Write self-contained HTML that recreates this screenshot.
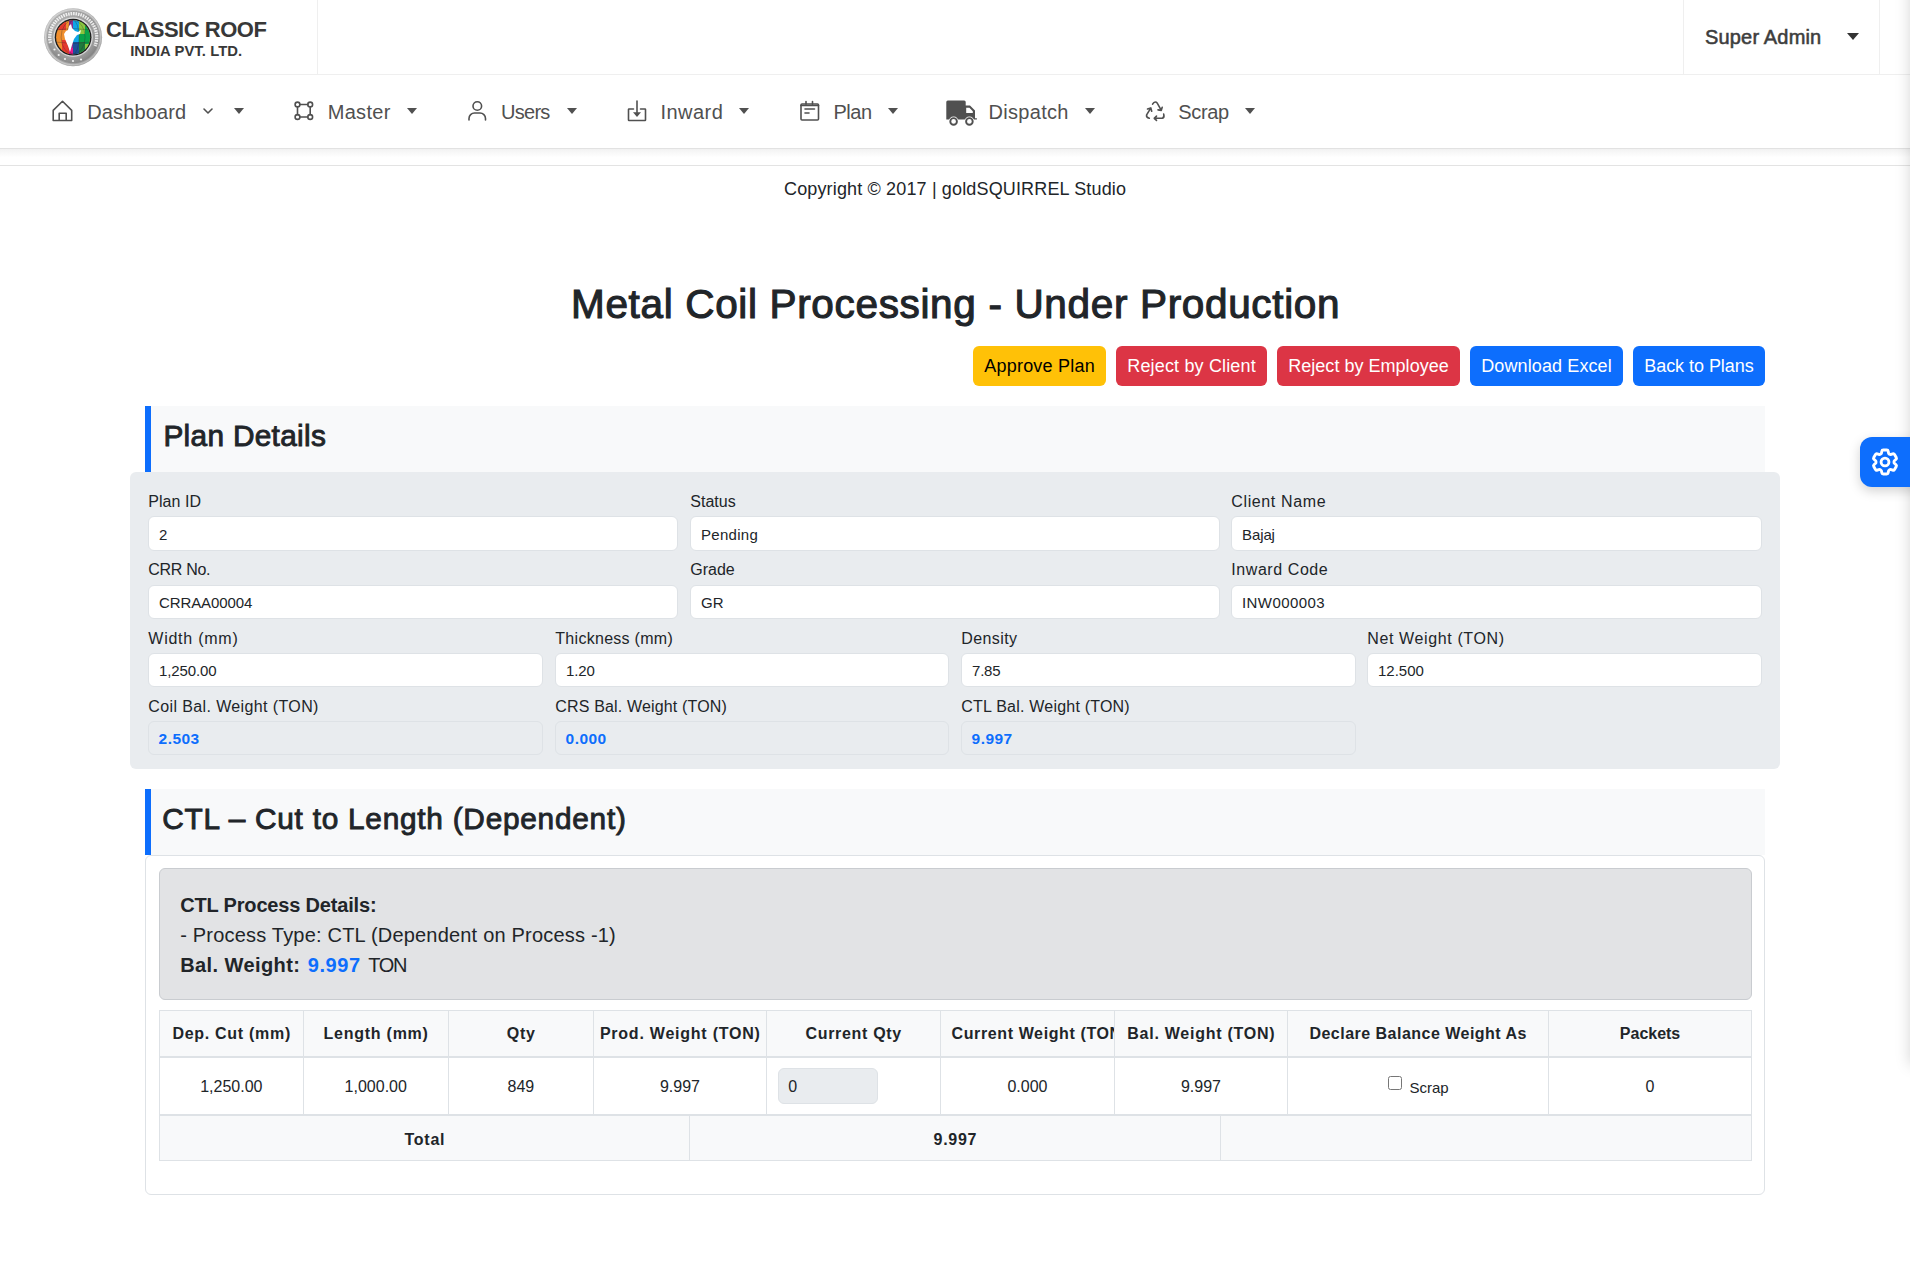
<!DOCTYPE html>
<html><head><meta charset="utf-8"><title>Metal Coil Processing</title>
<style>
html,body{margin:0;padding:0;}
body{width:1910px;height:1273px;position:relative;overflow:hidden;background:#fff;font-family:"Liberation Sans",sans-serif;color:#212529;}
.t{position:absolute;white-space:nowrap;line-height:1;}
.b{position:absolute;}
.caret{position:absolute;width:0;height:0;border-style:solid;}
</style></head><body>
<div class="b" style="left:0px;top:0px;width:1910px;height:74px;background:#fff;"></div>
<div class="b" style="left:0px;top:74px;width:1910px;height:1px;background:#efefef;"></div>
<div class="b" style="left:317px;top:0px;width:1px;height:74px;background:#efefef;"></div>
<div class="b" style="left:1683px;top:0px;width:1px;height:74px;background:#efefef;"></div>
<div class="b" style="left:1879px;top:0px;width:1px;height:74px;background:#efefef;"></div>
<div class="b" style="left:0px;top:75px;width:1910px;height:73px;background:#fff;"></div>
<div class="b" style="left:0px;top:149px;width:1910px;height:8px;background:linear-gradient(#f1f1f1,#f4f4f4 14%,#f8f8f8 45%,#fdfdfd 88%,#fff);"></div>
<div class="b" style="left:0px;top:148px;width:1910px;height:1px;background:#e2e2e2;"></div>
<div class="b" style="left:0px;top:165px;width:1910px;height:1px;background:#e3e3e3;"></div>
<svg class="b" style="left:40px;top:4px" width="66" height="66" viewBox="0 0 66 66">
<defs>
<radialGradient id="ring" cx="50%" cy="50%" r="50%"><stop offset="0.6" stop-color="#d8d8d8"/><stop offset="0.7" stop-color="#9d9d9d"/><stop offset="0.88" stop-color="#8a8a8a"/><stop offset="0.95" stop-color="#c9c9c9"/><stop offset="1" stop-color="#a5a5a5"/></radialGradient>
<linearGradient id="sh" x1="0" y1="0" x2="1" y2="1"><stop offset="0" stop-color="#fff" stop-opacity="0.35"/><stop offset="0.5" stop-color="#fff" stop-opacity="0"/><stop offset="1" stop-color="#000" stop-opacity="0.2"/></linearGradient>
<clipPath id="gc"><circle cx="33.1" cy="33.2" r="17"/></clipPath>
</defs>
<circle cx="33.1" cy="33.2" r="29" fill="url(#ring)"/>
<circle cx="33.1" cy="33.2" r="29" fill="url(#sh)"/>
<path d="M10.5 39 A23.5 23.5 0 1 1 55 42" fill="none" stroke="#f4f4f4" stroke-width="3.4" stroke-dasharray="1.7 0.8" opacity="0.9"/>
<circle cx="33.1" cy="33.2" r="19.6" fill="#dcdcdc"/>
<circle cx="33.1" cy="33.2" r="18.4" fill="#1e1e1e"/>
<g clip-path="url(#gc)">
<rect x="14" y="14" width="40" height="40" fill="#f0902f"/>
<path d="M14 14 H26 V26 H14 Z" fill="#e53a2f"/>
<path d="M22 36 H29 V54 H22 Z" fill="#e53a2f"/>
<rect x="29" y="14" width="4" height="40" fill="#8b2f8f"/>
<rect x="29" y="44" width="4" height="10" fill="#e8168c"/>
<rect x="33" y="14" width="6" height="40" fill="#10a6e6"/>
<rect x="33" y="38" width="6" height="16" fill="#1d4f9a"/>
<rect x="39" y="14" width="15" height="40" fill="#0aa34a"/>
<path d="M39 14 H45 V30 H39 Z M45 40 H54 V54 H45 Z" fill="#8cc63f"/>
<path d="M39 38 H45 V54 H39 Z" fill="#1f7a3e"/>
<g fill="none" stroke="#2a2a2a" stroke-width="0.5" opacity="0.6"><ellipse cx="33.1" cy="33.2" rx="6" ry="17"/><ellipse cx="33.1" cy="33.2" rx="12" ry="17"/><path d="M15 26 Q33 23 51 26 M15 38 Q33 41 51 38"/></g>
<path d="M29 22 L31 20 L32 24 L35 27 L38 28 L41 26 L40 30 L37 31 L34 35 L32 41 L30 48 L28 42 L25 35 L24 30 L26 27 L28 26 Z" fill="#fff"/>
</g>
<g fill="#f0f0f0"><circle cx="14.5" cy="45.5" r="1.1"/><circle cx="18.7" cy="51" r="1.1"/><circle cx="25" cy="55" r="1.1"/><circle cx="33" cy="57" r="1.1"/><circle cx="41" cy="55.5" r="1.1"/></g>
</svg>
<div class="t" style="left:106.00px;top:18.68px;font-size:22px;font-weight:700;color:#383838;letter-spacing:-0.491px;">CLASSIC ROOF</div>
<div class="t" style="left:130.20px;top:43.77px;font-size:14.8px;font-weight:700;color:#383838;letter-spacing:0.071px;">INDIA PVT. LTD.</div>
<div class="t" style="left:1705.00px;top:27.07px;font-size:20px;color:#3d3d3d;letter-spacing:0.170px;-webkit-text-stroke:0.55px #3d3d3d;">Super Admin</div>
<div class="caret" style="left:1847px;top:33px;border-width:7px 6.3px 0 6.3px;border-color:#333 transparent transparent transparent"></div>
<div class="t" style="left:87.20px;top:101.87px;font-size:20px;color:#505050;letter-spacing:0.150px;">Dashboard</div>
<div class="t" style="left:327.70px;top:101.87px;font-size:20px;color:#505050;letter-spacing:0.320px;">Master</div>
<div class="t" style="left:501.00px;top:101.87px;font-size:20px;color:#505050;letter-spacing:-0.725px;">Users</div>
<div class="t" style="left:660.50px;top:101.87px;font-size:20px;color:#505050;letter-spacing:0.460px;">Inward</div>
<div class="t" style="left:833.50px;top:101.87px;font-size:20px;color:#505050;letter-spacing:-0.500px;">Plan</div>
<div class="t" style="left:988.50px;top:101.87px;font-size:20px;color:#505050;letter-spacing:0.300px;">Dispatch</div>
<div class="t" style="left:1178.30px;top:101.87px;font-size:20px;color:#505050;letter-spacing:-0.375px;">Scrap</div>
<div class="caret" style="left:233.5px;top:108px;border-width:6.5px 5.7px 0 5.7px;border-color:#505050 transparent transparent transparent"></div>
<div class="caret" style="left:407.2px;top:108px;border-width:6.5px 5.7px 0 5.7px;border-color:#505050 transparent transparent transparent"></div>
<div class="caret" style="left:567px;top:108px;border-width:6.5px 5.7px 0 5.7px;border-color:#505050 transparent transparent transparent"></div>
<div class="caret" style="left:739px;top:108px;border-width:6.5px 5.7px 0 5.7px;border-color:#505050 transparent transparent transparent"></div>
<div class="caret" style="left:888.4px;top:108px;border-width:6.5px 5.7px 0 5.7px;border-color:#505050 transparent transparent transparent"></div>
<div class="caret" style="left:1084.5px;top:108px;border-width:6.5px 5.7px 0 5.7px;border-color:#505050 transparent transparent transparent"></div>
<div class="caret" style="left:1245px;top:108px;border-width:6.5px 5.7px 0 5.7px;border-color:#505050 transparent transparent transparent"></div>
<svg class="b" style="left:201px;top:106px" width="14" height="10" viewBox="0 0 14 10"><path d="M3 3 L7 7 L11 3" fill="none" stroke="#505050" stroke-width="1.6" stroke-linecap="round" stroke-linejoin="round"/></svg>
<svg class="b" style="left:50px;top:98px" width="25" height="25" viewBox="0 0 25 25"><path d="M3.2 12.4 L12.5 3.3 L21.7 12.4 V22.5 H3.2 Z M9.2 22.5 V15.2 H16.2 V22.5" fill="none" stroke="#505050" stroke-width="1.6" stroke-linecap="round" stroke-linejoin="round"/></svg>
<svg class="b" style="left:292px;top:99px" width="24" height="24" viewBox="0 0 24 24"><circle cx="5.5" cy="5.5" r="2.4" fill="none" stroke="#505050" stroke-width="1.6" stroke-linecap="round" stroke-linejoin="round"/><circle cx="18.2" cy="5.5" r="2.4" fill="none" stroke="#505050" stroke-width="1.6" stroke-linecap="round" stroke-linejoin="round"/><circle cx="5.5" cy="18" r="2.4" fill="none" stroke="#505050" stroke-width="1.6" stroke-linecap="round" stroke-linejoin="round"/><circle cx="18.2" cy="18" r="2.4" fill="none" stroke="#505050" stroke-width="1.6" stroke-linecap="round" stroke-linejoin="round"/><path d="M5.5 7.9 V15.6 M7.9 5.5 H15.8 M18.2 7.9 V15.6 M7.9 18 H15.8" fill="none" stroke="#505050" stroke-width="1.6" stroke-linecap="round" stroke-linejoin="round"/></svg>
<svg class="b" style="left:466px;top:99px" width="24" height="24" viewBox="0 0 24 24"><circle cx="11.3" cy="7" r="4.3" fill="none" stroke="#505050" stroke-width="1.6" stroke-linecap="round" stroke-linejoin="round"/><path d="M3 21 V19.5 A5.5 5.5 0 0 1 8.5 14 H14 A5.5 5.5 0 0 1 19.5 19.5 V21" fill="none" stroke="#505050" stroke-width="1.6" stroke-linecap="round" stroke-linejoin="round"/></svg>
<svg class="b" style="left:620px;top:92px" width="40" height="38" viewBox="0 0 40 38"><path d="M13.5 17 H9 Q8.5 17 8.5 17.5 V28 Q8.5 28.5 9 28.5 H25 Q25.5 28.5 25.5 28 V17.5 Q25.5 17 25 17 H20.5 M17 9 V20.5" fill="none" stroke="#505050" stroke-width="1.6" stroke-linecap="round" stroke-linejoin="round"/><path d="M13 20.2 H21 L17 24.9 Z" fill="#505050"/></svg>
<svg class="b" style="left:798px;top:99px" width="24" height="24" viewBox="0 0 24 24"><rect x="3" y="5" width="17.5" height="16" rx="1" fill="none" stroke="#505050" stroke-width="1.6" stroke-linecap="round" stroke-linejoin="round"/><path d="M8 2.5 V5 M14.5 2.5 V5 M3 6.5 H20.5 M7 10 H16.5 M7 14 H11" fill="none" stroke="#505050" stroke-width="1.6" stroke-linecap="round" stroke-linejoin="round"/></svg>
<svg class="b" style="left:940px;top:92px" width="45" height="38" viewBox="0 0 45 38"><path d="M6.3 9.9 Q6.3 8.4 7.8 8.4 H24.2 Q25.7 8.4 25.7 9.9 V13.4 H30 L35 18.5 V26.3 H36.9 V27.6 H6.3 Z M26.2 15.8 V20.9 H32.8 V19.2 L29.4 15.8 Z" fill="#505050" fill-rule="evenodd"/><circle cx="13.6" cy="29.4" r="4.9" fill="#fff"/><circle cx="29.4" cy="29.4" r="4.9" fill="#fff"/><circle cx="13.6" cy="29.4" r="3.3" fill="none" stroke="#505050" stroke-width="1.9"/><circle cx="29.4" cy="29.4" r="3.3" fill="none" stroke="#505050" stroke-width="1.9"/></svg>
<svg class="b" style="left:1135px;top:92px" width="40" height="38" viewBox="0 0 40 38"><path d="M17.6 12.2 Q19 9.3 21.3 10.2 Q22 10.6 22.4 11.4 L26 17.8 M23 17.9 L26.3 18.4 L27.2 15.2 M14.3 26.3 Q11 25.5 11.6 22.8 L15.6 16.3 M12.5 17 L15.8 15.9 L16.7 19.2 M19.2 26.3 H27.3 Q29.7 25.6 28.7 22.1 M21.5 24.1 L19.2 26.3 L21.5 28.4" fill="none" stroke="#505050" stroke-width="1.6" stroke-linecap="round" stroke-linejoin="round"/></svg>
<div class="t" style="left:784.00px;top:179.76px;font-size:18px;letter-spacing:0.149px;">Copyright © 2017 | goldSQUIRREL Studio</div>
<div class="t" style="left:571.00px;top:283.72px;font-size:40.5px;letter-spacing:0.659px;-webkit-text-stroke:1.1px #212529;">Metal Coil Processing - Under Production</div>
<div class="b" style="left:973px;top:346px;width:133px;height:40px;background:#ffc107;border-radius:6px;"></div>
<div class="t" style="left:984.25px;top:357.26px;font-size:18px;color:#000;letter-spacing:0.218px;">Approve Plan</div>
<div class="b" style="left:1116px;top:346px;width:151px;height:40px;background:#dc3545;border-radius:6px;"></div>
<div class="t" style="left:1127.25px;top:357.26px;font-size:18px;color:#fff;letter-spacing:0.160px;">Reject by Client</div>
<div class="b" style="left:1277px;top:346px;width:183px;height:40px;background:#dc3545;border-radius:6px;"></div>
<div class="t" style="left:1288.25px;top:357.26px;font-size:18px;color:#fff;letter-spacing:0.024px;">Reject by Employee</div>
<div class="b" style="left:1470px;top:346px;width:153px;height:40px;background:#0d6efd;border-radius:6px;"></div>
<div class="t" style="left:1481.25px;top:357.26px;font-size:18px;color:#fff;letter-spacing:0.108px;">Download Excel</div>
<div class="b" style="left:1633px;top:346px;width:132px;height:40px;background:#0d6efd;border-radius:6px;"></div>
<div class="t" style="left:1644.25px;top:357.26px;font-size:18px;color:#fff;letter-spacing:-0.050px;">Back to Plans</div>
<div class="b" style="left:145px;top:406px;width:1620px;height:66px;background:#f8f9fa;"></div>
<div class="b" style="left:145px;top:406px;width:6px;height:66px;background:#0d6efd;"></div>
<div class="t" style="left:163.40px;top:420.77px;font-size:29.8px;letter-spacing:0.318px;-webkit-text-stroke:0.9px #212529;">Plan Details</div>
<div class="b" style="left:130px;top:472px;width:1650px;height:297px;background:#e9ecef;border-radius:6px;"></div>
<div class="t" style="left:148.30px;top:494.26px;font-size:16px;letter-spacing:0.033px;">Plan ID</div>
<div class="b" style="left:148px;top:516px;width:530px;height:35px;background:#fff;border:1px solid #dee2e6;border-radius:6px;box-sizing:border-box;"></div>
<div class="t" style="left:159.00px;top:526.90px;font-size:15px;">2</div>
<div class="t" style="left:690.30px;top:494.26px;font-size:16px;">Status</div>
<div class="b" style="left:690px;top:516px;width:530px;height:35px;background:#fff;border:1px solid #dee2e6;border-radius:6px;box-sizing:border-box;"></div>
<div class="t" style="left:701.00px;top:526.90px;font-size:15px;letter-spacing:0.283px;">Pending</div>
<div class="t" style="left:1231.30px;top:494.26px;font-size:16px;letter-spacing:0.620px;">Client Name</div>
<div class="b" style="left:1231px;top:516px;width:531px;height:35px;background:#fff;border:1px solid #dee2e6;border-radius:6px;box-sizing:border-box;"></div>
<div class="t" style="left:1242.00px;top:526.90px;font-size:15px;letter-spacing:-0.100px;">Bajaj</div>
<div class="t" style="left:148.30px;top:562.26px;font-size:16px;letter-spacing:-0.300px;">CRR No.</div>
<div class="b" style="left:148px;top:585px;width:530px;height:34px;background:#fff;border:1px solid #dee2e6;border-radius:6px;box-sizing:border-box;"></div>
<div class="t" style="left:159.00px;top:595.10px;font-size:15px;letter-spacing:-0.111px;">CRRAA00004</div>
<div class="t" style="left:690.30px;top:562.26px;font-size:16px;">Grade</div>
<div class="b" style="left:690px;top:585px;width:530px;height:34px;background:#fff;border:1px solid #dee2e6;border-radius:6px;box-sizing:border-box;"></div>
<div class="t" style="left:701.00px;top:595.10px;font-size:15px;">GR</div>
<div class="t" style="left:1231.30px;top:562.26px;font-size:16px;letter-spacing:0.570px;">Inward Code</div>
<div class="b" style="left:1231px;top:585px;width:531px;height:34px;background:#fff;border:1px solid #dee2e6;border-radius:6px;box-sizing:border-box;"></div>
<div class="t" style="left:1242.00px;top:595.10px;font-size:15px;letter-spacing:0.425px;">INW000003</div>
<div class="t" style="left:148.30px;top:631.06px;font-size:16px;letter-spacing:0.756px;">Width (mm)</div>
<div class="b" style="left:148px;top:653px;width:395px;height:34px;background:#fff;border:1px solid #dee2e6;border-radius:6px;box-sizing:border-box;"></div>
<div class="t" style="left:159.00px;top:663.30px;font-size:15px;letter-spacing:-0.129px;">1,250.00</div>
<div class="t" style="left:555.30px;top:631.06px;font-size:16px;letter-spacing:0.285px;">Thickness (mm)</div>
<div class="b" style="left:555px;top:653px;width:394px;height:34px;background:#fff;border:1px solid #dee2e6;border-radius:6px;box-sizing:border-box;"></div>
<div class="t" style="left:566.00px;top:663.30px;font-size:15px;letter-spacing:-0.100px;">1.20</div>
<div class="t" style="left:961.30px;top:631.06px;font-size:16px;letter-spacing:0.400px;">Density</div>
<div class="b" style="left:961px;top:653px;width:395px;height:34px;background:#fff;border:1px solid #dee2e6;border-radius:6px;box-sizing:border-box;"></div>
<div class="t" style="left:972.00px;top:663.30px;font-size:15px;letter-spacing:-0.200px;">7.85</div>
<div class="t" style="left:1367.30px;top:631.06px;font-size:16px;letter-spacing:0.620px;">Net Weight (TON)</div>
<div class="b" style="left:1367px;top:653px;width:395px;height:34px;background:#fff;border:1px solid #dee2e6;border-radius:6px;box-sizing:border-box;"></div>
<div class="t" style="left:1378.00px;top:663.30px;font-size:15px;">12.500</div>
<div class="t" style="left:148.30px;top:699.26px;font-size:16px;letter-spacing:0.381px;">Coil Bal. Weight (TON)</div>
<div class="b" style="left:148px;top:721px;width:395px;height:34px;background:#e9ecef;border:1px solid #dee2e6;border-radius:6px;box-sizing:border-box;"></div>
<div class="t" style="left:158.60px;top:730.58px;font-size:15.5px;font-weight:700;color:#0d6efd;letter-spacing:0.450px;">2.503</div>
<div class="t" style="left:555.30px;top:699.26px;font-size:16px;letter-spacing:0.160px;">CRS Bal. Weight (TON)</div>
<div class="b" style="left:555px;top:721px;width:394px;height:34px;background:#e9ecef;border:1px solid #dee2e6;border-radius:6px;box-sizing:border-box;"></div>
<div class="t" style="left:565.60px;top:730.58px;font-size:15.5px;font-weight:700;color:#0d6efd;letter-spacing:0.450px;">0.000</div>
<div class="t" style="left:961.30px;top:699.26px;font-size:16px;letter-spacing:0.210px;">CTL Bal. Weight (TON)</div>
<div class="b" style="left:961px;top:721px;width:395px;height:34px;background:#e9ecef;border:1px solid #dee2e6;border-radius:6px;box-sizing:border-box;"></div>
<div class="t" style="left:971.60px;top:730.58px;font-size:15.5px;font-weight:700;color:#0d6efd;letter-spacing:0.450px;">9.997</div>
<div class="b" style="left:145px;top:789px;width:1620px;height:66px;background:#f8f9fa;"></div>
<div class="b" style="left:145px;top:789px;width:6px;height:66px;background:#0d6efd;"></div>
<div class="t" style="left:162.20px;top:804.07px;font-size:29.8px;letter-spacing:0.750px;-webkit-text-stroke:0.9px #212529;">CTL – Cut to Length (Dependent)</div>
<div class="b" style="left:145px;top:855px;width:1620px;height:340px;background:#fff;border:1px solid #dee2e6;border-radius:6px;box-sizing:border-box;"></div>
<div class="b" style="left:159px;top:868px;width:1593px;height:132px;background:#e2e3e5;border:1px solid #c9ccd0;border-radius:6px;box-sizing:border-box;"></div>
<div class="t" style="left:180.20px;top:894.87px;font-size:20px;font-weight:700;letter-spacing:-0.174px;">CTL Process Details:</div>
<div class="t" style="left:180.20px;top:924.77px;font-size:20px;letter-spacing:0.198px;">- Process Type: CTL (Dependent on Process -1)</div>
<div class="t" style="left:180.20px;top:954.87px;font-size:20px;font-weight:700;letter-spacing:0.418px;">Bal. Weight:</div>
<div class="t" style="left:307.80px;top:954.87px;font-size:20px;font-weight:700;color:#0d6efd;letter-spacing:0.550px;">9.997</div>
<div class="t" style="left:368.30px;top:954.87px;font-size:20px;letter-spacing:-1.300px;">TON</div>
<div class="b" style="left:159px;top:1010px;width:1593px;height:47px;background:#f8f9fa;"></div>
<div class="b" style="left:159px;top:1058px;width:1593px;height:57px;background:#fff;"></div>
<div class="b" style="left:159px;top:1116px;width:1593px;height:45px;background:#f8f9fa;"></div>
<div class="b" style="left:159px;top:1010px;width:1593px;height:1px;background:#dee2e6;"></div>
<div class="b" style="left:159px;top:1056px;width:1593px;height:2px;background:#dee2e6;"></div>
<div class="b" style="left:159px;top:1114px;width:1593px;height:2px;background:#dee2e6;"></div>
<div class="b" style="left:159px;top:1160px;width:1593px;height:1px;background:#dee2e6;"></div>
<div class="b" style="left:159px;top:1010px;width:1px;height:106px;background:#dee2e6;"></div>
<div class="b" style="left:303px;top:1010px;width:1px;height:106px;background:#dee2e6;"></div>
<div class="b" style="left:448px;top:1010px;width:1px;height:106px;background:#dee2e6;"></div>
<div class="b" style="left:593px;top:1010px;width:1px;height:106px;background:#dee2e6;"></div>
<div class="b" style="left:766px;top:1010px;width:1px;height:106px;background:#dee2e6;"></div>
<div class="b" style="left:940px;top:1010px;width:1px;height:106px;background:#dee2e6;"></div>
<div class="b" style="left:1114px;top:1010px;width:1px;height:106px;background:#dee2e6;"></div>
<div class="b" style="left:1287px;top:1010px;width:1px;height:106px;background:#dee2e6;"></div>
<div class="b" style="left:1548px;top:1010px;width:1px;height:106px;background:#dee2e6;"></div>
<div class="b" style="left:1751px;top:1010px;width:1px;height:106px;background:#dee2e6;"></div>
<div class="b" style="left:159px;top:1116px;width:1px;height:45px;background:#dee2e6;"></div>
<div class="b" style="left:689px;top:1116px;width:1px;height:45px;background:#dee2e6;"></div>
<div class="b" style="left:1220px;top:1116px;width:1px;height:45px;background:#dee2e6;"></div>
<div class="b" style="left:1751px;top:1116px;width:1px;height:45px;background:#dee2e6;"></div>
<div class="t" style="left:172.40px;top:1025.96px;font-size:16px;font-weight:700;letter-spacing:0.708px;">Dep. Cut (mm)</div>
<div class="t" style="left:323.55px;top:1025.96px;font-size:16px;font-weight:700;letter-spacing:0.750px;">Length (mm)</div>
<div class="t" style="left:506.85px;top:1025.96px;font-size:16px;font-weight:700;letter-spacing:0.650px;">Qty</div>
<div class="t" style="left:599.90px;top:1025.96px;font-size:16px;font-weight:700;letter-spacing:0.765px;">Prod. Weight (TON)</div>
<div class="t" style="left:805.45px;top:1025.96px;font-size:16px;font-weight:700;letter-spacing:0.690px;">Current Qty</div>
<div class="b" style="left:941px;top:1011px;width:173px;height:45px;overflow:hidden">
<div class="t" style="left:10.50px;top:14.96px;font-size:16px;font-weight:700;letter-spacing:0.620px;">Current Weight (TON)</div>
</div>
<div class="t" style="left:1127.30px;top:1025.96px;font-size:16px;font-weight:700;letter-spacing:0.744px;">Bal. Weight (TON)</div>
<div class="t" style="left:1309.45px;top:1025.96px;font-size:16px;font-weight:700;letter-spacing:0.483px;">Declare Balance Weight As</div>
<div class="t" style="left:1619.85px;top:1025.96px;font-size:16px;font-weight:700;letter-spacing:-0.017px;">Packets</div>
<div class="t" style="left:200.15px;top:1079.26px;font-size:16px;">1,250.00</div>
<div class="t" style="left:344.60px;top:1079.26px;font-size:16px;">1,000.00</div>
<div class="t" style="left:507.50px;top:1079.26px;font-size:16px;">849</div>
<div class="t" style="left:659.90px;top:1079.26px;font-size:16px;">9.997</div>
<div class="t" style="left:1007.40px;top:1079.26px;font-size:16px;">0.000</div>
<div class="t" style="left:1180.95px;top:1079.26px;font-size:16px;">9.997</div>
<div class="t" style="left:1645.60px;top:1079.26px;font-size:16px;">0</div>
<div class="b" style="left:777.5px;top:1067.5px;width:100.0px;height:36.5px;background:#e9ecef;border:1px solid #dee2e6;border-radius:6px;box-sizing:border-box;"></div>
<div class="t" style="left:788.20px;top:1078.66px;font-size:16px;">0</div>
<div class="b" style="left:1388px;top:1076px;width:14px;height:14px;background:#fff;border:1px solid #767676;border-radius:2.5px;box-sizing:border-box;"></div>
<div class="t" style="left:1409.40px;top:1079.50px;font-size:15px;">Scrap</div>
<div class="t" style="left:404.50px;top:1131.96px;font-size:16px;font-weight:700;letter-spacing:0.750px;">Total</div>
<div class="t" style="left:933.55px;top:1131.96px;font-size:16px;font-weight:700;letter-spacing:0.700px;">9.997</div>
<div class="b" style="left:1860px;top:437px;width:70px;height:50px;background:#0d6efd;border-radius:12px 0 0 12px;box-shadow:0 4px 12px rgba(0,0,0,0.18);z-index:5;"></div>
<svg class="b" style="left:1868.8px;top:445.8px;z-index:6" width="32" height="32" viewBox="0 0 24 24"><path d="M9.594 3.94c.09-.542.56-.94 1.11-.94h2.593c.55 0 1.02.398 1.11.94l.213 1.281c.063.374.313.686.645.87.074.04.147.083.22.127.325.196.72.257 1.075.124l1.217-.456a1.125 1.125 0 0 1 1.37.49l1.296 2.247a1.125 1.125 0 0 1-.26 1.431l-1.003.827c-.293.241-.438.613-.43.992a7.723 7.723 0 0 1 0 .255c-.008.378.137.75.43.991l1.004.827c.424.35.534.955.26 1.43l-1.298 2.247a1.125 1.125 0 0 1-1.369.491l-1.217-.456c-.355-.133-.75-.072-1.076.124a6.47 6.47 0 0 1-.22.128c-.331.183-.581.495-.644.869l-.213 1.281c-.09.543-.56.94-1.11.94h-2.594c-.55 0-1.019-.398-1.11-.94l-.213-1.281c-.062-.374-.312-.686-.644-.87a6.52 6.52 0 0 1-.22-.127c-.325-.196-.72-.257-1.076-.124l-1.217.456a1.125 1.125 0 0 1-1.369-.49l-1.297-2.247a1.125 1.125 0 0 1 .26-1.431l1.004-.827c.292-.24.437-.613.43-.991a6.932 6.932 0 0 1 0-.255c.007-.38-.138-.751-.43-.992l-1.004-.827a1.125 1.125 0 0 1-.26-1.43l1.297-2.247a1.125 1.125 0 0 1 1.37-.491l1.216.456c.356.133.751.072 1.076-.124.072-.044.146-.086.22-.128.332-.183.582-.495.644-.869l.214-1.28Z" fill="none" stroke="#fff" stroke-width="2.15" stroke-linecap="round" stroke-linejoin="round"/><circle cx="12" cy="12" r="2.95" fill="none" stroke="#fff" stroke-width="2.15"/></svg>
<div class="b" style="left:1910px;top:-60px;width:400px;height:1125px;background:#fff;box-shadow:0 0 14px rgba(0,0,0,0.17);"></div>
</body></html>
